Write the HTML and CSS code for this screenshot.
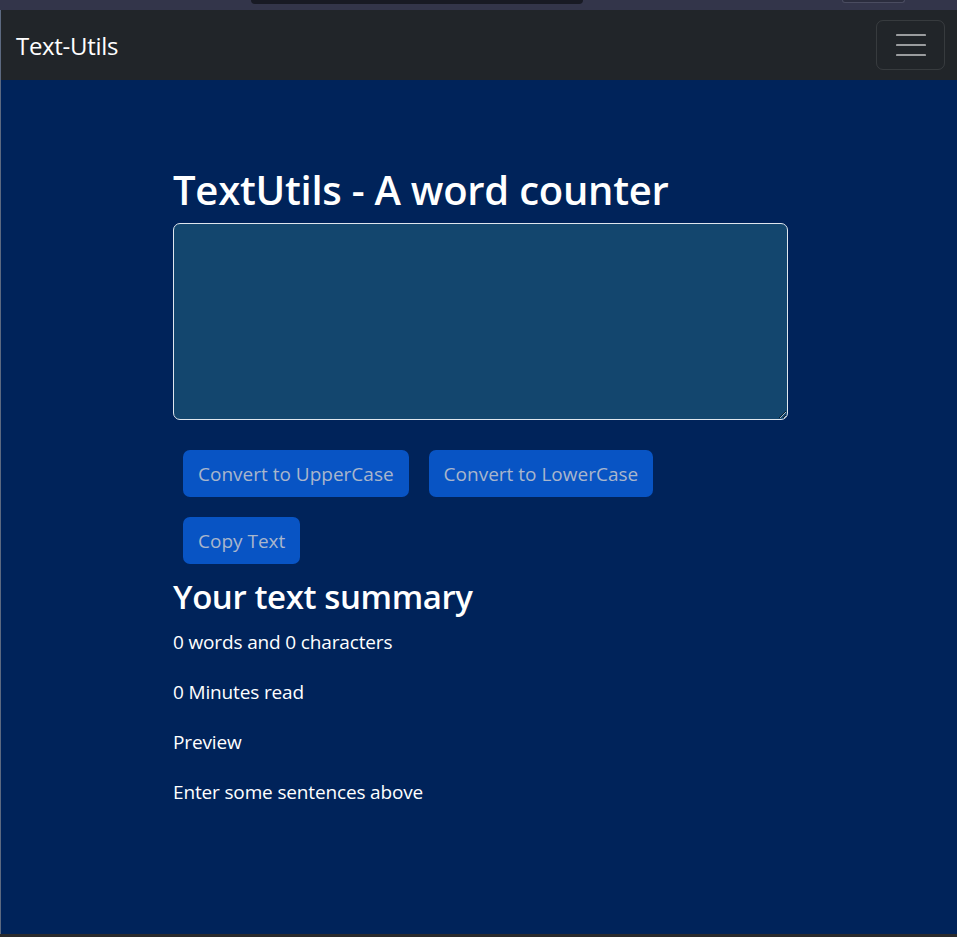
FILE: index.html
```html
<!DOCTYPE html>
<html lang="en">
<head>
<meta charset="utf-8">
<title>TextUtils</title>
<link rel="stylesheet" href="styles.css">
</head>
<body>
<div class="chrome">
  <div class="addr"></div>
  <div class="ext"></div>
</div>
<div class="frame">
  <nav class="navbar">
    <span class="brand">Text-Utils</span>
    <button class="toggler" aria-label="Toggle navigation">
      <svg width="30" height="30" viewBox="0 0 30 30"><path d="M1 5h28M1 15h28M1 25h28" stroke="rgba(255,255,255,0.55)" stroke-width="2.2" stroke-linecap="round"/></svg>
    </button>
  </nav>
  <main class="main">
    <div class="container">
      <h1 class="title">TextUtils - A word counter</h1>
      <textarea class="box" rows="8"></textarea>
      <div class="actions">
        <button class="btn">Convert to UpperCase</button>
        <button class="btn">Convert to LowerCase</button>
        <button class="btn">Copy Text</button>
      </div>
      <h2 class="sub">Your text summary</h2>
      <p class="line">0 words and 0 characters</p>
      <p class="line">0 Minutes read</p>
      <p class="line">Preview</p>
      <p class="line">Enter some sentences above</p>
    </div>
  </main>
</div>
<div class="bottom"></div>
</body>
</html>
```
FILE: styles.css
```css
* { box-sizing: border-box; }
html, body { margin: 0; height: 100%; }
body {
  font-family: "Open Sans", "Noto Sans", sans-serif;
  background: #2a2a2c;
  display: flex;
  flex-direction: column;
  overflow: hidden;
}
.chrome {
  height: 10px;
  background: #33354a;
  display: flex;
  align-items: flex-start;
  flex: none;
}
.addr {
  margin-left: 251px;
  width: 332px;
  height: 4px;
  background: #181a24;
  border-radius: 0 0 5px 5px;
}
.ext {
  margin-left: 259px;
  width: 63px;
  height: 3px;
  background: #2b2d3e;
  border: 1px solid #4a4c60;
  border-top: none;
  border-radius: 0 0 4px 4px;
}
.frame {
  height: 924px;
  flex: none;
  border-left: 1px solid #5c6980;
  display: flex;
  flex-direction: column;
}
.bottom { height: 3px; background: #2a2a2c; flex: none; }
.navbar {
  height: 70px;
  flex: none;
  background: #212529;
  display: flex;
  align-items: center;
  justify-content: space-between;
  padding: 0 12px 0 15px;
}
.brand {
  color: #fff;
  font-size: 24px;
  letter-spacing: -0.3px;
}
.toggler {
  width: 69px;
  height: 50px;
  background: transparent;
  border: 1px solid rgba(255,255,255,0.1);
  border-radius: 7px;
  display: flex;
  align-items: center;
  justify-content: center;
  padding: 0;
}
.toggler svg { display: block; }
.main {
  flex: 1;
  background: #00235a;
  color: #fff;
}
.container {
  width: 615px;
  margin-left: 172px;
  padding-top: 85px;
}
.title {
  margin: 0 0 8px;
  font-size: 40px;
  line-height: 50px;
  font-weight: 600;
  letter-spacing: -0.25px;
}
.box {
  display: block;
  width: 615px;
  height: 197px;
  background: #13466e;
  border: 1px solid #dfe6ee;
  border-radius: 7px;
  margin: 0 0 20px;
  resize: vertical;
  color: #fff;
}
.actions {
  display: flex;
  flex-wrap: wrap;
}
.btn {
  margin: 10px;
  height: 47px;
  padding: 0 15px;
  background: #0854c4;
  color: #a9b6cc;
  border: none;
  border-radius: 7px;
  font-family: inherit;
  font-size: 19px;
  letter-spacing: 0;
}
.sub {
  margin: 2px 0 9px;
  font-size: 33px;
  line-height: 42px;
  font-weight: 600;
  letter-spacing: -0.4px;
}
.line {
  margin: 0 0 20px;
  font-size: 19px;
  line-height: 30px;
  letter-spacing: -0.15px;
}
```
